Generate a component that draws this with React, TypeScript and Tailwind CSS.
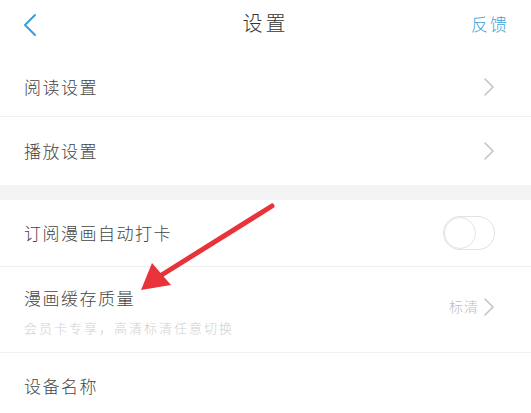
import React from 'react';

const font = { fontFamily: '"Noto Sans CJK SC", "Noto Sans", sans-serif' };

const Chevron = ({ className = '' }: { className?: string }) => (
  <svg width="12" height="20" viewBox="0 0 12 20" className={className}>
    <path d="M2 2 L10 10 L2 18" fill="none" stroke="#c4c4c4" strokeWidth="1.6" strokeLinecap="round" strokeLinejoin="round" />
  </svg>
);

const Row = ({ label, children, className = '' }: { label: string; children?: React.ReactNode; className?: string }) => (
  <div className={`flex items-center justify-between pl-6 pr-9 ${className}`}>
    <span className="text-[17px] font-light tracking-[1.5px] text-[#444]">{label}</span>
    {children}
  </div>
);

export default function App() {
  return (
    <div className="relative w-[531px] h-[413px] overflow-hidden bg-white" style={font}>
      {/* header */}
      <div className="relative flex h-[58px] items-center justify-between pl-[22px] pr-[22px]">
        <svg width="16" height="24" viewBox="0 0 16 24" className="-mt-[8px]">
          <path d="M13 2 L3 12 L13 22" fill="none" stroke="#3a9fd6" strokeWidth="2" strokeLinecap="round" strokeLinejoin="round" />
        </svg>
        <span className="absolute left-1/2 top-[8px] -translate-x-1/2 text-[20px] font-light tracking-[3px] text-[#333]">设置</span>
        <span className="-mt-[10px] text-[17px] font-light tracking-[2px] text-[#3ba2d8]">反馈</span>
      </div>

      <Row label="阅读设置" className="h-[59px] border-b border-[#f0f0f0]">
        <Chevron />
      </Row>
      <Row label="播放设置" className="h-[68px]">
        <Chevron />
      </Row>

      <div className="h-[15px] bg-[#f4f4f4]" />

      <Row label="订阅漫画自动打卡" className="h-[67px] border-b border-[#f0f0f0] pr-[36px]">
        <div className="flex h-[34px] w-[52px] items-center rounded-full border border-[#e2e2e2] bg-white">
          <div className="h-[32px] w-[32px] rounded-full border border-[#e4e4e4] bg-white" />
        </div>
      </Row>

      <div className="flex h-[86px] items-center justify-between border-b border-[#f0f0f0] pl-6 pr-9">
        <div className="flex flex-col gap-[12px] pt-[4px]">
          <span className="text-[17px] font-light leading-[20px] tracking-[1.5px] text-[#444]">漫画缓存质量</span>
          <span className="text-[13px] font-light leading-[16px] tracking-[2px] text-[#d0d0d0]">会员卡专享，高清标清任意切换</span>
        </div>
        <div className="-mt-[6px] flex items-center gap-[4px]">
          <span className="text-[14px] font-light tracking-[1px] text-[#bdbdbd]">标清</span>
          <Chevron />
        </div>
      </div>

      <Row label="设备名称" className="h-[66px]" />

      {/* annotation arrow */}
      <svg className="pointer-events-none absolute left-0 top-0" width="531" height="413" viewBox="0 0 531 413">
        <line x1="272" y1="206" x2="160" y2="276" stroke="#e8333a" strokeWidth="5" strokeLinecap="round" />
        <polygon points="141,290 152,263 171,285" fill="#e8333a" />
      </svg>
    </div>
  );
}
